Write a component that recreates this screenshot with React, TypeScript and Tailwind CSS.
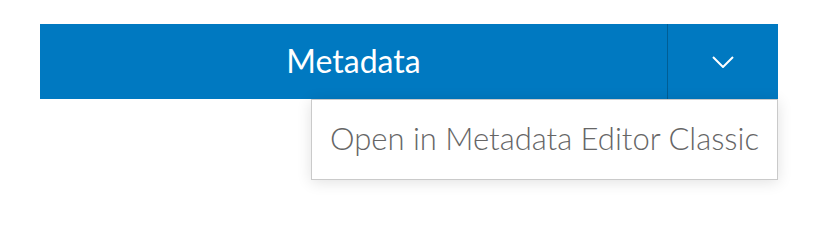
import React from "react";

export default function App() {
  return (
    <div className="w-[820px] h-[204px] bg-white pt-[24px] pl-[40px] font-['Lato','Noto_Sans',sans-serif]">
      <div className="relative w-[738px]">
        <div className="flex h-[75px] bg-[#0079c1]">
          <button className="flex-1 text-white text-[32px] leading-none flex items-center justify-center pb-[2px]">
            Metadata
          </button>
          <div className="w-px bg-[#005e95]" />
          <button className="w-[110px] flex items-center justify-center">
            <svg width="22" height="12" viewBox="0 0 22 12" fill="none">
              <path d="M1 1l10 10L21 1" stroke="white" strokeWidth="2" />
            </svg>
          </button>
        </div>
        <div className="absolute right-0 top-full w-[467px] h-[81px] bg-white border border-[#cacaca] shadow-[0_2px_14px_rgba(0,0,0,0.12)] flex items-center pl-[18px] pb-[2px]">
          <span className="text-[31px] font-light text-[#666666] leading-none">
            Open in Metadata Editor Classic
          </span>
        </div>
      </div>
    </div>
  );
}
